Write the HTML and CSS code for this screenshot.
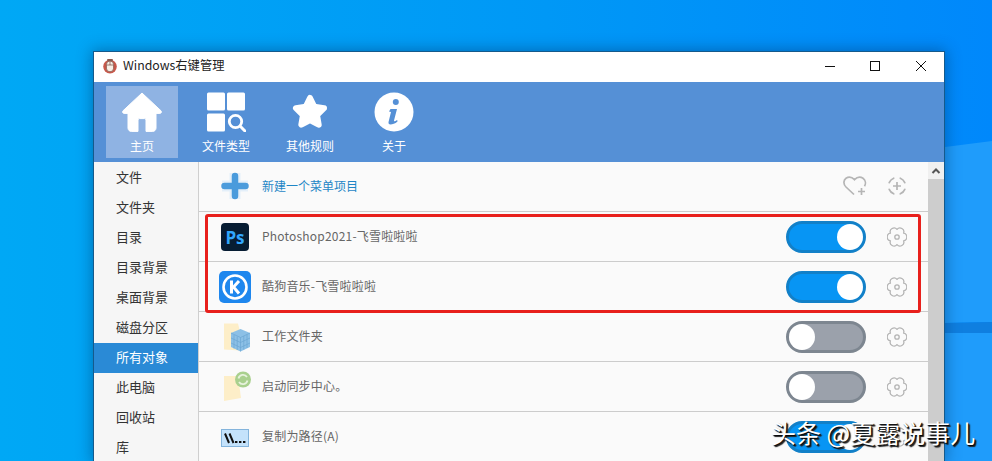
FILE: index.html
```html
<!DOCTYPE html>
<html lang="zh">
<head>
<meta charset="utf-8">
<title>Windows右键管理</title>
<link rel="stylesheet" href="styles.css">
</head>
<body>
<svg class="wallpaper" viewBox="0 0 992 461" preserveAspectRatio="none">
  <defs>
    <linearGradient id="sky" x1="0" y1="0" x2="1" y2="0">
      <stop offset="0" stop-color="#00a8f5"/>
      <stop offset="0.55" stop-color="#0098f6"/>
      <stop offset="1" stop-color="#0088fb"/>
    </linearGradient>
  </defs>
  <rect width="992" height="461" fill="url(#sky)"/>
  <polygon points="945,147 992,141 992,322 945,323" fill="#1f9cfb"/>
  <polygon points="945,323 992,322 992,333 945,333" fill="#0f7fe0"/>
  <polygon points="945,333 992,333 992,461 945,461" fill="#1f9cfb"/>
</svg>

<main class="window">
  <header class="titlebar">
    <svg class="app-icon" viewBox="0 0 16 16">
      <circle cx="8" cy="8.600" r="6.800" fill="#c8584a"/>
      <rect x="4.400" y="3" width="7.200" height="10.800" rx="3.600" fill="#f6efe6" stroke="#7a4a40" stroke-width=".7"/>
      <path d="M8 3v4M4.800 7h6.400" stroke="#7a4a40" stroke-width=".7"/>
      <rect x="5" y="1" width="6" height="2" rx="1" fill="#8a5a50"/>
    </svg>
    <span class="title">Windows右键管理</span>
    <div class="controls">
      <svg viewBox="0 0 46 30"><path d="M19 14.500h10" stroke="#111" fill="none"/></svg>
      <svg viewBox="0 0 46 30"><rect x="18.500" y="9.500" width="9" height="9" stroke="#111" fill="none"/></svg>
      <svg viewBox="0 0 46 30"><path d="M18 9l10 10M28 9l-10 10" stroke="#111" fill="none"/></svg>
    </div>
  </header>

  <nav class="toolbar">
    <div class="tool is-active">
      <svg class="tool-icon" viewBox="0 0 40 40"><path d="M20 1 1 18.800c-.9 1.100-.3 2.600 1.100 2.600H6v14.600c0 2 1.400 3.400 3.400 3.400h6.600V28c0-.8.600-1.400 1.400-1.400h5.200c.8 0 1.400.6 1.400 1.400v11.400h6.600c2 0 3.400-1.400 3.400-3.400V21.400h3.900c1.400 0 2-1.500 1.100-2.600z" fill="#fff" stroke="#fff" stroke-linejoin="round"/></svg>
      <span>主页</span>
    </div>
    <div class="tool">
      <svg class="tool-icon" viewBox="0 0 40 40"><g fill="#fff"><rect x="1" y="0.500" width="18" height="18" rx="1.500"/><rect x="21" y="0.500" width="18" height="18" rx="1.500"/><rect x="1" y="21.500" width="18" height="18" rx="1.500"/></g><circle cx="29.500" cy="29.500" r="6.200" fill="none" stroke="#fff" stroke-width="2.800"/><path d="m34.500 34.500 4.500 4.500" stroke="#fff" stroke-width="3" stroke-linecap="round"/></svg>
      <span>文件类型</span>
    </div>
    <div class="tool">
      <svg class="tool-icon" viewBox="0 0 40 40"><path d="M20 6 24.300 14.800 34 16.200 27 23l1.700 9.700L20 28.100l-8.700 4.600L13 23 6 16.200l9.700-1.400z" fill="#fff" stroke="#fff" stroke-width="6" stroke-linejoin="round"/></svg>
      <span>其他规则</span>
    </div>
    <div class="tool">
      <svg class="tool-icon" viewBox="0 0 40 40"><circle cx="20" cy="20" r="19.500" fill="#fff"/><circle cx="21.800" cy="10" r="3" fill="#5590d6"/><path d="M16.500 17h6.500l-3 11.500c-.2 1 .6 1.300 3.200-.5l.3 1.500c-2.500 2.300-5 3-7 3-1.700 0-2.300-1.200-1.900-2.800l2.400-9.800-2-.5z" fill="#5590d6"/></svg>
      <span>关于</span>
    </div>
  </nav>

  <div class="body">
    <aside class="sidebar">
      <div class="side-item">文件</div>
      <div class="side-item">文件夹</div>
      <div class="side-item">目录</div>
      <div class="side-item">目录背景</div>
      <div class="side-item">桌面背景</div>
      <div class="side-item">磁盘分区</div>
      <div class="side-item is-selected">所有对象</div>
      <div class="side-item">此电脑</div>
      <div class="side-item">回收站</div>
      <div class="side-item">库</div>
    </aside>

    <section class="content">
      <div class="row">
        <svg class="row-icon" viewBox="0 0 32 32"><path d="M16 2v26M3 15h26" stroke="#e4eff9" stroke-width="11"/><path d="M16 5v20M5.500 15h21" stroke="#4a9bdc" stroke-width="6.500" stroke-linecap="round"/></svg>
        <span class="new-label">新建一个菜单项目</span>
        <div class="new-actions">
          <svg class="heart" viewBox="0 0 24 20"><path d="M11 18.500 3 11C0 8 .5 4 3 2.200c2.500-1.700 6-1.200 8.500 1.500 2.500-2.700 6-3.200 8.500-1.500 2.700 2 3 5.500 1.500 8" fill="none" stroke="#b5b5b5" stroke-width="1.700"/><path d="M18.500 12v7M15 15.500h7" stroke="#b5b5b5" stroke-width="1.700"/></svg>
          <svg class="focus" viewBox="0 0 20 20"><path d="M13.300 2.200A8.500 8.500 0 0 1 17.800 6.700M17.800 13.300A8.500 8.500 0 0 1 13.300 17.800M6.700 17.800A8.500 8.500 0 0 1 2.200 13.300M2.200 6.700A8.500 8.500 0 0 1 6.700 2.200" fill="none" stroke="#b5b5b5" stroke-width="1.700" stroke-linecap="round"/><path d="M10 6v8M6 10h8" stroke="#b5b5b5" stroke-width="1.700"/></svg>
        </div>
      </div>
      <div class="row">
        <svg class="row-icon" viewBox="0 0 32 32"><rect x="2" y="2" width="28" height="28" rx="4" fill="#071d33"/><text x="16" y="22.500" class="ps-text">Ps</text></svg>
        <span class="label">Photoshop2021-飞雪啦啦啦</span>
        <div class="toggle is-on"><i></i></div>
        <svg class="gear" viewBox="0 0 20 20"><use href="#gear"/></svg>
      </div>
      <div class="row">
        <svg class="row-icon" viewBox="0 0 32 32"><rect width="32" height="32" rx="5" fill="#1e87ee"/><circle cx="16" cy="16" r="11.500" fill="none" stroke="#fff" stroke-width="2.600"/><path d="M12.500 9.500v13M20 10l-5.500 6 5.500 6.500" fill="none" stroke="#fff" stroke-width="3"/></svg>
        <span class="label">酷狗音乐-飞雪啦啦啦</span>
        <div class="toggle is-on"><i></i></div>
        <svg class="gear" viewBox="0 0 20 20"><use href="#gear"/></svg>
      </div>
      <div class="row">
        <svg class="row-icon" viewBox="0 0 32 32"><path d="M5 2.500h14l2 8v19l-16-1z" fill="#fdeec8"/><path d="M12 12l9.500-4 9.500 4v14l-9.500 4.500L12 26z" fill="#8cc0e6"/><path d="M12 12l9.500 4.500L31 12M21.500 16.500v14M15 14v13.500M18.200 15.500v13.500M24.800 15v13.500M28 13.500v13.500M12 17l9.500 4.500L31 17M12 22l9.500 4.500L31 22" fill="none" stroke="#6ba6d3" stroke-width=".7"/></svg>
        <span class="label">工作文件夹</span>
        <div class="toggle"><i></i></div>
        <svg class="gear" viewBox="0 0 20 20"><use href="#gear"/></svg>
      </div>
      <div class="row">
        <svg class="row-icon" viewBox="0 0 32 32"><path d="M5 5h14l3 22-17 3z" fill="#fdeec8"/><circle cx="24" cy="8.500" r="8" fill="#a9d08e"/><path d="M19.500 7.500a4.700 4.700 0 0 1 8.500-1.500M28.500 9.500a4.700 4.700 0 0 1-8.500 1.500" fill="none" stroke="#e6f2dc" stroke-width="1.800"/></svg>
        <span class="label">启动同步中心。</span>
        <div class="toggle"><i></i></div>
        <svg class="gear" viewBox="0 0 20 20"><use href="#gear"/></svg>
      </div>
      <div class="row">
        <svg class="row-icon" viewBox="0 0 32 32"><rect x="2.500" y="8.500" width="27" height="17" fill="#c4e2fb" stroke="#84b4dc"/><path d="m6 12.500 4 9.500M10.500 12.500l4 9.500" stroke="#111" stroke-width="2" fill="none"/><path d="M16 21h2.400M20 21h2.400M24 21h2.400" stroke="#111" stroke-width="2"/></svg>
        <span class="label">复制为路径(A)</span>
        <div class="toggle is-on"><i></i></div>
        <svg class="gear" viewBox="0 0 20 20"><use href="#gear"/></svg>
      </div>
      <div class="highlight"></div>
    </section>

    <div class="scrollbar">
      <div class="scroll-up"><svg viewBox="0 0 10 8"><path d="M1.500 6 5 2.500 8.500 6" fill="none" stroke="#555" stroke-width="2"/></svg></div>
    </div>
  </div>
</main>

<svg class="defs" width="0" height="0"><symbol id="gear" viewBox="0 0 20 20"><path d="M10 2.400A3.850 3.850 0 0 1 16.580 6.200A3.850 3.850 0 0 1 16.580 13.800A3.850 3.850 0 0 1 10 17.600A3.850 3.850 0 0 1 3.420 13.800A3.850 3.850 0 0 1 3.420 6.200A3.850 3.850 0 0 1 10 2.400z" fill="none" stroke="#b4b4b4" stroke-width="1.300" stroke-linejoin="round"/><circle cx="10" cy="10" r="2.200" fill="none" stroke="#b4b4b4" stroke-width="1.300"/></symbol></svg>

<div class="watermark">头条 @夏露说事儿</div>
</body>
</html>
```
FILE: styles.css
```css
* { box-sizing: border-box; }
html, body { margin: 0; height: 461px; overflow: hidden; }
body {
  position: relative;
  font-family: "Noto Sans CJK SC", "Liberation Sans", sans-serif;
  padding: 52px 48px 0 94px;
}
.wallpaper { position: absolute; inset: 0; width: 992px; height: 461px; }
.defs { position: absolute; }

.window {
  position: relative;
  width: 850px;
  height: 409px;
  background: #fff;
  overflow: hidden;
  display: flex;
  flex-direction: column;
  box-shadow: 0 0 0 1px #155a8c, 0 0 14px 2px rgba(0, 50, 100, .45);
}

.titlebar { flex: 0 0 30px; display: flex; align-items: center; padding-left: 8px; background: #fff; }
.app-icon { width: 16px; height: 16px; margin-right: 5px; margin-bottom: 2px; }
.title { font-size: 12.300px; color: #222; margin-bottom: 4px; }
.controls { margin-left: auto; display: flex; }
.controls svg { width: 46px; height: 30px; display: block; }

.toolbar { flex: 0 0 80px; background: #5590d6; display: flex; padding: 4px 12px; gap: 12px; }
.tool { width: 72px; height: 72px; display: flex; flex-direction: column; align-items: center; color: #fff; font-size: 12px; padding-top: 6px; }
.tool-icon { width: 40px; height: 40px; flex: none; }
.tool span { margin-top: 4px; line-height: 20px; }
.tool.is-active { background: #8fb3e3; }

.body { flex: 1; display: flex; min-height: 0; }
.sidebar { width: 105px; flex: none; background: #f6f6f6; border-right: 1px solid #cfcfcf; padding-top: 1px; }
.side-item { height: 30px; line-height: 28px; padding-left: 22px; font-size: 13px; color: #333; }
.side-item.is-selected { background: #2a8ad6; color: #fff; }

.content { position: relative; flex: 1; min-width: 0; background: #fafafa; }
.row { height: 50px; display: flex; align-items: center; padding-left: 20px; border-bottom: 1px solid #cccccc; }
.row-icon { width: 32px; height: 32px; flex: none; margin-right: 11px; }
.label { font-size: 12px; color: #666; letter-spacing: .2px; flex: 1; margin-bottom: 2px; }
.new-label { font-size: 12px; color: #1f86c6; flex: 1; margin-bottom: 2px; }
.new-actions { display: flex; gap: 20px; align-items: center; margin-right: 21px; margin-bottom: 1px; }
.heart { width: 24px; height: 20px; }
.focus { width: 20px; height: 20px; }
.ps-text { font: 700 17px "Open Sans", "Liberation Sans", sans-serif; fill: #31a8ff; text-anchor: middle; }

.toggle { width: 80px; height: 32px; border-radius: 16px; background: #9ba1ab; border: 3px solid #7d8690; margin-right: 21px; position: relative; flex: none; }
.toggle i { position: absolute; left: 0; top: 0; width: 26px; height: 26px; border-radius: 50%; background: #fff; }
.toggle.is-on { background: #0795f4; border-color: #1280c8; }
.toggle.is-on i { left: auto; right: 0; }
.gear { width: 20px; height: 20px; flex: none; margin-right: 21px; }

.highlight { position: absolute; left: 6px; top: 52px; width: 716px; height: 99px; border: 3px solid #e8201c; border-radius: 3px; pointer-events: none; }

.scrollbar { width: 16px; flex: none; background: #cdcdcd; }
.scroll-up { height: 17px; background: #f0f0f0; display: flex; align-items: center; justify-content: center; }
.scroll-up svg { width: 10px; height: 8px; }

.watermark {
  position: absolute;
  left: 771px;
  top: 416px;
  color: #fff;
  font-size: 25px;
  line-height: 32px;
  white-space: nowrap;
  text-shadow: 1px 1px 1px #000, 2px 2px 1px #222;
}
```
